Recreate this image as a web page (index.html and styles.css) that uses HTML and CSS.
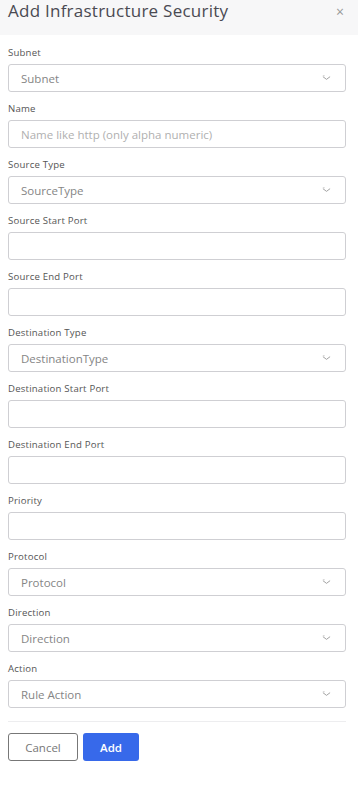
FILE: index.html
```html
<!DOCTYPE html>
<html>
<head>
<meta charset="utf-8">
<link rel="stylesheet" href="styles.css">
</head>
<body>
<div class="modal">
  <div class="header">
    <h1 class="title">Add Infrastructure Security</h1>
    <span class="close">×</span>
  </div>
  <form class="form">
    <div class="field"><label class="label">Subnet</label><div class="box select"><span class="val">Subnet</span><svg class="chev" viewBox="0 0 10 6" width="9" height="6"><path d="M1 1.5 L5 4.5 L9 1.5" fill="none" stroke="#999" stroke-width="1"/><path d="M1 0.5 L3 0.5" stroke="#bbb" stroke-width="0.8"/></svg></div></div>
    <div class="field"><label class="label">Name</label><div class="box"><span class="ph">Name like http (only alpha numeric)</span></div></div>
    <div class="field"><label class="label">Source Type</label><div class="box select"><span class="val">SourceType</span><svg class="chev" viewBox="0 0 10 6" width="9" height="6"><path d="M1 1.5 L5 4.5 L9 1.5" fill="none" stroke="#999" stroke-width="1"/><path d="M1 0.5 L3 0.5" stroke="#bbb" stroke-width="0.8"/></svg></div></div>
    <div class="field"><label class="label">Source Start Port</label><div class="box"></div></div>
    <div class="field"><label class="label">Source End Port</label><div class="box"></div></div>
    <div class="field"><label class="label">Destination Type</label><div class="box select"><span class="val">DestinationType</span><svg class="chev" viewBox="0 0 10 6" width="9" height="6"><path d="M1 1.5 L5 4.5 L9 1.5" fill="none" stroke="#999" stroke-width="1"/><path d="M1 0.5 L3 0.5" stroke="#bbb" stroke-width="0.8"/></svg></div></div>
    <div class="field"><label class="label">Destination Start Port</label><div class="box"></div></div>
    <div class="field"><label class="label">Destination End Port</label><div class="box"></div></div>
    <div class="field"><label class="label">Priority</label><div class="box"></div></div>
    <div class="field"><label class="label">Protocol</label><div class="box select"><span class="val">Protocol</span><svg class="chev" viewBox="0 0 10 6" width="9" height="6"><path d="M1 1.5 L5 4.5 L9 1.5" fill="none" stroke="#999" stroke-width="1"/><path d="M1 0.5 L3 0.5" stroke="#bbb" stroke-width="0.8"/></svg></div></div>
    <div class="field"><label class="label">Direction</label><div class="box select"><span class="val">Direction</span><svg class="chev" viewBox="0 0 10 6" width="9" height="6"><path d="M1 1.5 L5 4.5 L9 1.5" fill="none" stroke="#999" stroke-width="1"/><path d="M1 0.5 L3 0.5" stroke="#bbb" stroke-width="0.8"/></svg></div></div>
    <div class="field last"><label class="label">Action</label><div class="box select"><span class="val">Rule Action</span><svg class="chev" viewBox="0 0 10 6" width="9" height="6"><path d="M1 1.5 L5 4.5 L9 1.5" fill="none" stroke="#999" stroke-width="1"/><path d="M1 0.5 L3 0.5" stroke="#bbb" stroke-width="0.8"/></svg></div></div>
    <div class="divider"></div>
    <div class="actions">
      <button type="button" class="btn cancel">Cancel</button>
      <button type="button" class="btn add">Add</button>
    </div>
  </form>
</div>
</body>
</html>
```
FILE: styles.css
```css
* { box-sizing: border-box; }
body {
  margin: 0;
  background: #fff;
  font-family: "Open Sans", "Noto Sans", sans-serif;
  color: #444;
}
.header {
  height: 35px;
  background: #f7f7f8;
  display: flex;
  align-items: center;
  justify-content: space-between;
  padding: 0 14px 0 8px;
}
.title {
  margin: 0;
  font-size: 17px;
  font-weight: 500;
  color: #4a4a52;
  letter-spacing: 0.25px;
  line-height: 20px;
  margin-top: -13px;
}
.close {
  font-size: 14px;
  color: #999;
  margin-top: -13px;
}
.form {
  padding: 10px 12px 0 8px;
}
.field {
  display: flex;
  flex-direction: column;
  margin-bottom: 9px;
}
.field.last { margin-bottom: 13px; }
.label {
  font-size: 9.6px;
  line-height: 16px;
  color: #555;
  margin-bottom: 3px;
  letter-spacing: 0.2px;
}
.box {
  height: 28px;
  border: 1px solid #cfcfd3;
  border-radius: 3px;
  display: flex;
  align-items: center;
  padding: 0 12px;
  font-size: 11.5px;
}
.select { justify-content: space-between; }
.val { color: #858585; }
.ph { color: #b0b0b0; }
.chev { margin-right: 2px; }
.divider {
  height: 1px;
  background: #ededef;
  margin-bottom: 11px;
}
.actions {
  display: flex;
  gap: 5px;
}
.btn {
  height: 28px;
  border-radius: 3px;
  font-family: inherit;
  font-size: 11.5px;
  padding: 0;
}
.cancel {
  width: 70px;
  background: #fff;
  border: 1px solid #777;
  color: #777;
}
.add {
  width: 56px;
  background: #3769ea;
  border: none;
  color: #fff;
  font-weight: 600;
}
```
